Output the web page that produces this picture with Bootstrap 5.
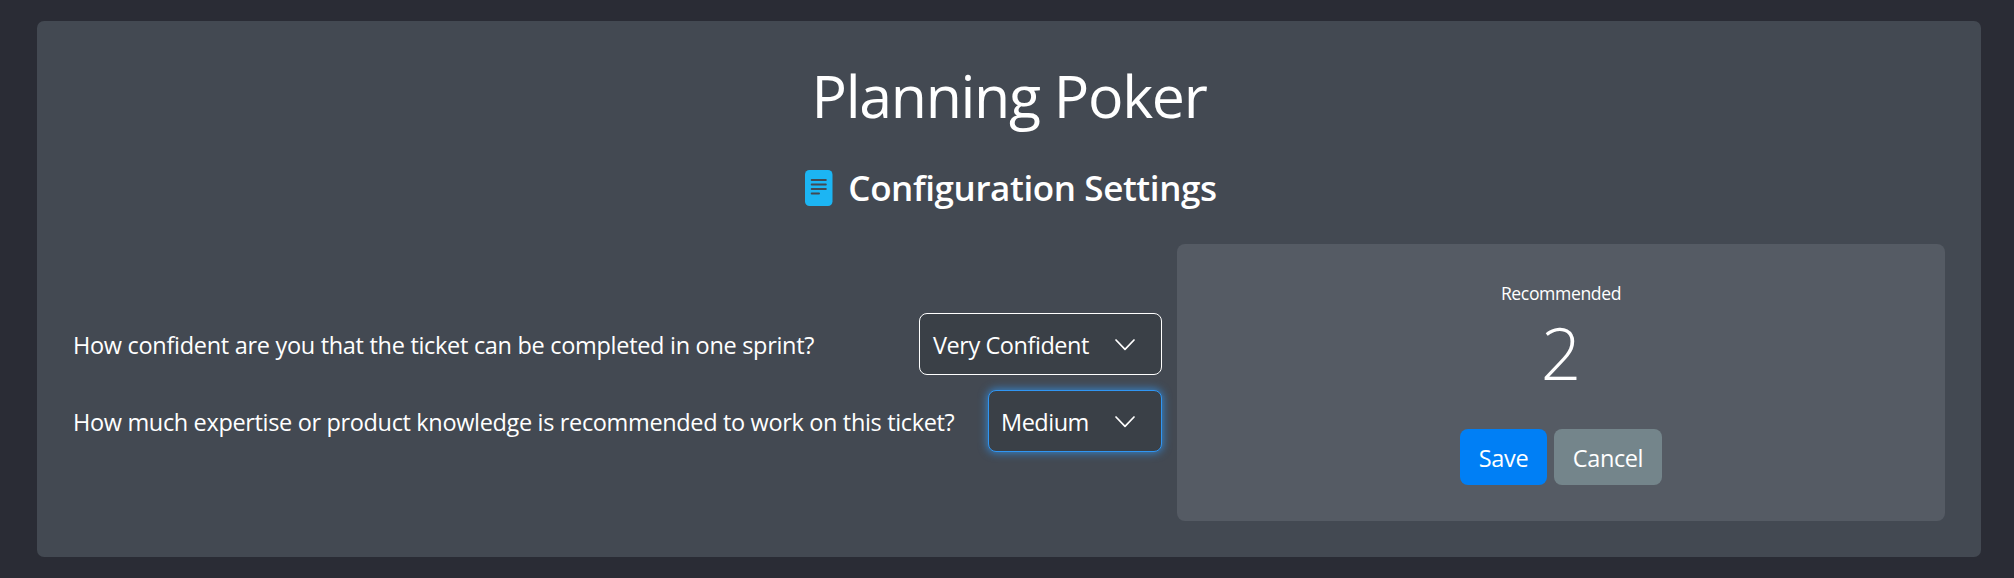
<!DOCTYPE html>
<html lang="en">
<head>
<meta charset="utf-8">
<meta name="viewport" content="width=device-width, initial-scale=1">
<title>Planning Poker</title>
<link href="https://cdn.jsdelivr.net/npm/bootstrap@5.3.0/dist/css/bootstrap.min.css" rel="stylesheet">
<style>
  body { background: #2a2c35; color: #fff; font-family: "Open Sans", "Noto Sans", sans-serif; font-size: 23.5px; padding: 21px 33px 21px 37px; }
  .panel { background: #434952; border-radius: 7px; padding: 36px; height: 536px; }
  .page-title { font-size: 59px; font-weight: 390; line-height: 76px; letter-spacing: -1.3px; margin: 0 0 33px; }
  .section-title { font-size: 35px; font-weight: 600; line-height: 44px; letter-spacing: -.4px; gap: 15px; margin: 0 0 34px; padding-left: 4px; }
  .split { display: grid; grid-template-columns: 1089px 768px; gap: 15px; }
  .questions { gap: 15px; }
  .question { height: 62px; }
  .question label { letter-spacing: -.3px; padding-top: 4px; }
  .question + .question label { letter-spacing: -.345px; }
  .picker { height: 62px; width: 243px; background: #3a4047; border: 1px solid #fff; border-radius: 8px; color: #fff; font-size: 23.5px; letter-spacing: -.45px; line-height: 32px; padding: 2px 26px 0 13px; }
  .picker:hover { background: #3a4047; color: #fff; border-color: #fff; }
  .picker.focused { width: 174px; padding-left: 12px; letter-spacing: -.5px; border-color: #3096f3; box-shadow: 0 0 8px 1px rgba(48, 150, 243, .75); }
  .result { background: #555b64; border-radius: 8px; height: 277px; padding: 36px 0; }
  .result-label { font-size: 17.6px; line-height: 27px; letter-spacing: -.38px; }
  .result-value { font-size: 71px; font-weight: 300; line-height: 86px; margin: 3px 0 33px; }
  .action { height: 56px; border: 0; border-radius: 8px; color: #fff; font-size: 23.5px; line-height: 32px; padding: 2px 0 0; }
  .action-save { width: 87px; background: #007ff5; letter-spacing: -.3px; }
  .action-cancel { width: 108px; background: #74858b; letter-spacing: -.4px; }
</style>
</head>
<body>
<main class="panel">
  <h1 class="page-title text-center">Planning Poker</h1>
  <h2 class="section-title d-flex justify-content-center align-items-center">
    <svg width="28" height="36" viewBox="0 0 28 36" aria-hidden="true">
      <rect width="27.5" height="36" rx="4.5" fill="#1cb5f3"/>
      <path d="M6.7 10h14.1M6.7 14.5h14.1M6.7 19h14.1M6.7 23.6h7.3" stroke="#434952" stroke-width="2" stroke-linecap="round"/>
    </svg>
    <span>Configuration Settings</span>
  </h2>
  <div class="split">
    <div class="questions d-flex flex-column justify-content-center">
      <div class="question d-flex align-items-center justify-content-between">
        <label for="confidence">How confident are you that the ticket can be completed in one sprint?</label>
        <button id="confidence" type="button" class="btn picker d-flex align-items-center justify-content-between">
          <span>Very Confident</span>
          <svg width="20" height="12" viewBox="0 0 20 12" fill="none" stroke="#fff" stroke-width="1.7" stroke-linecap="round" stroke-linejoin="round"><path d="M1 1l9 9.4L19 1"/></svg>
        </button>
      </div>
      <div class="question d-flex align-items-center justify-content-between">
        <label for="expertise">How much expertise or product knowledge is recommended to work on this ticket?</label>
        <button id="expertise" type="button" class="btn picker focused d-flex align-items-center justify-content-between">
          <span>Medium</span>
          <svg width="20" height="12" viewBox="0 0 20 12" fill="none" stroke="#fff" stroke-width="1.7" stroke-linecap="round" stroke-linejoin="round"><path d="M1 1l9 9.4L19 1"/></svg>
        </button>
      </div>
    </div>
    <section class="result text-center">
      <div class="result-label">Recommended</div>
      <div class="result-value">2</div>
      <div class="d-flex justify-content-center" style="gap: 7px">
        <button type="button" class="btn action action-save">Save</button>
        <button type="button" class="btn action action-cancel">Cancel</button>
      </div>
    </section>
  </div>
</main>
<script src="https://cdn.jsdelivr.net/npm/bootstrap@5.3.0/dist/js/bootstrap.bundle.min.js"></script>
</body>
</html>
